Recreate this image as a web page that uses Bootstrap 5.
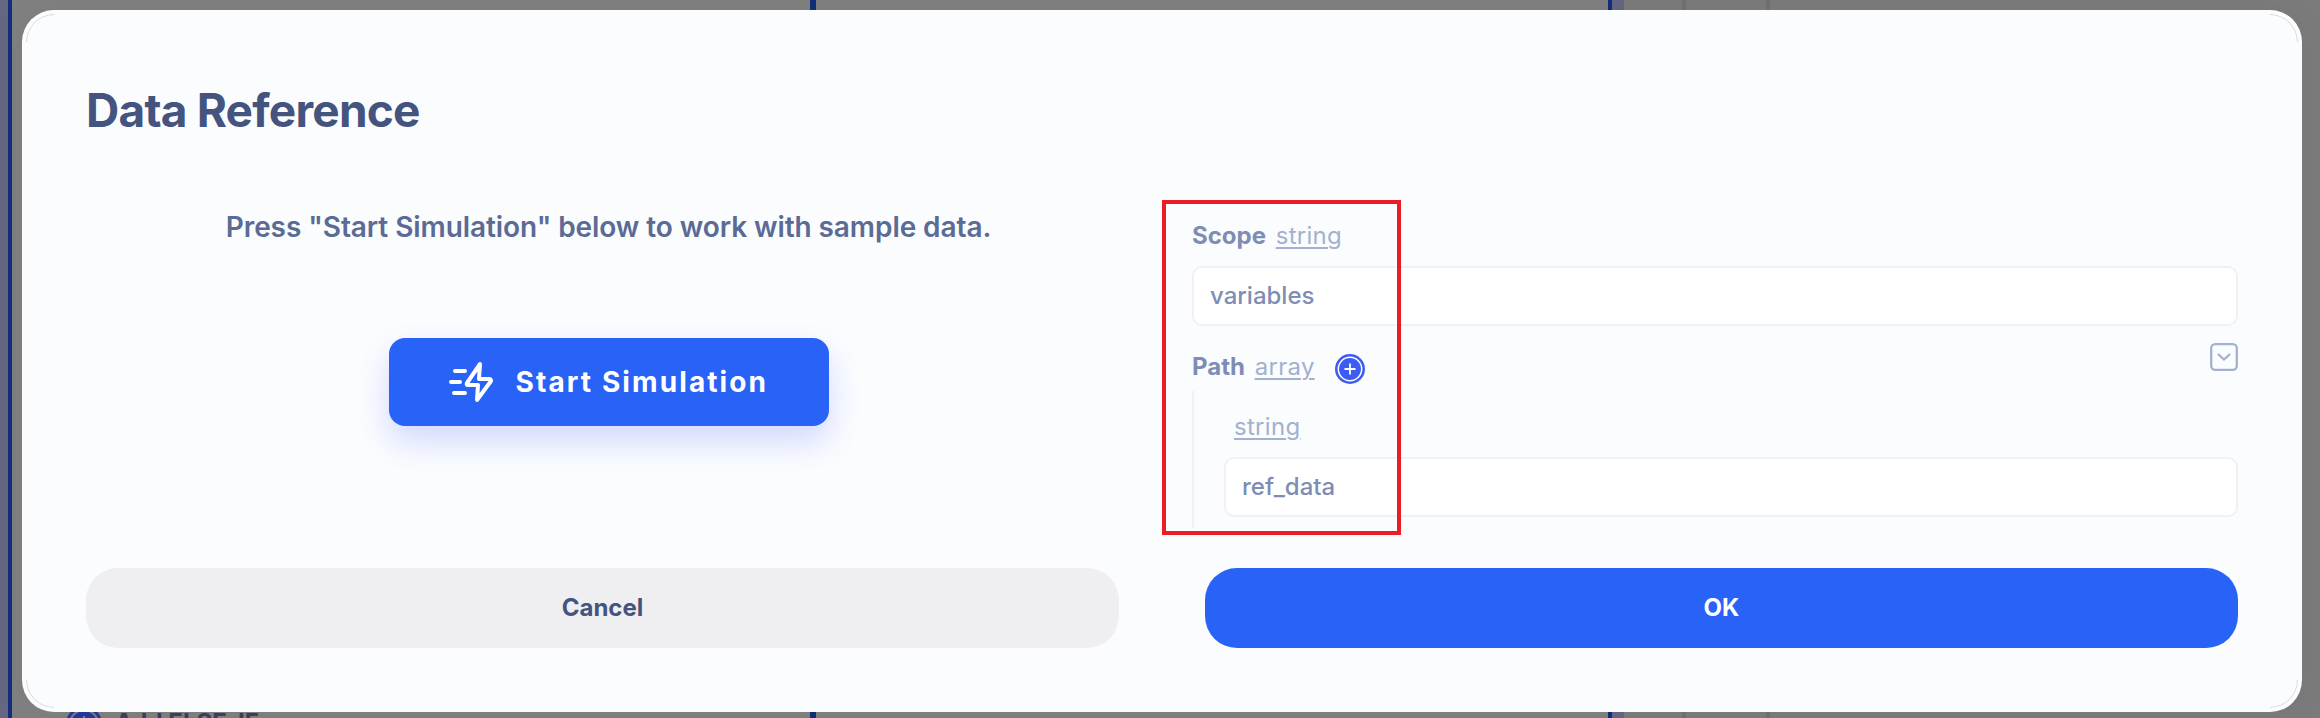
<!DOCTYPE html>
<html lang="en">
<head>
<meta charset="utf-8">
<title>Data Reference</title>
<link href="https://cdn.jsdelivr.net/npm/bootstrap@5.3.0/dist/css/bootstrap.min.css" rel="stylesheet">
<style>
body{font-family:Inter,"Liberation Sans",sans-serif;width:2320px;height:718px;overflow:hidden;background:#808080;position:relative;font-size:24px}
.rails{position:absolute;inset:0}
.rail{position:absolute;top:0;bottom:0}
.rail-blue{background:#132e7a}
.rail-soft{background:#64677f}
.rail-line{background:#717171}
.under-action{position:absolute;left:66px;top:706px;color:#3a4059;font-weight:700;line-height:36px}
.sheet{margin:10px 0 0 22px;width:2280px;height:702px;border-radius:32px;background:#fafcfe;padding:76px 64px 64px;position:relative;box-shadow:0 0 40px rgba(0,0,0,.04)}
.sheet-edge{position:absolute;inset:4px;border-radius:28px;pointer-events:none}
.sheet h1{font-size:46px;font-weight:700;color:#44547f;line-height:48px;margin:0;letter-spacing:-.77px}
.content-area{height:362px;position:relative;margin-top:6px;padding-top:60px;margin-bottom:12px}
.pane-left{width:1045px}
.hint{font-size:28px;font-weight:600;color:#5b6b95;line-height:36px;margin:9px 0 93px;letter-spacing:-.08px}
.btn-sim{width:440px;height:88px;border-radius:16px;background:#2962f6;color:#fff;font-size:28px;font-weight:700;letter-spacing:2.1px;box-shadow:0 16px 32px rgba(60,80,255,.2);padding:0 0 0 60px}
.pane-right{width:1046px;margin-left:61px;color:#7d8db3}
.field-label{font-weight:700;line-height:30px}
.kind{color:#a3b1ce;text-decoration:underline;font-weight:400;letter-spacing:.3px;text-decoration-thickness:2px;text-underline-offset:3px}
.field-box{height:60px;border:2px solid #f0f1f6;border-radius:10px;background:#fff;color:#7d8db3;font-size:24px;font-weight:500;padding:0 16px}
.nested{border-left:2px solid #f0f1f6;padding-left:30px;height:137px}
.marker{position:absolute;left:1162px;top:200px;width:239px;height:335px;border:4px solid #ee1c24}
.btn-foot{height:80px;border-radius:32px;font-size:24px;font-weight:700;border:0}
.btn-cancel{background:#efeff1;color:#44547f}
.btn-ok{background:#2962f6;color:#fff}
.foot{gap:86px}
</style>
</head>
<body>
<div class="rails">
 <div class="rail rail-soft" style="left:0;width:8px"></div>
 <div class="rail rail-blue" style="left:8px;width:4px"></div>
 <div class="rail rail-blue" style="left:810px;width:6px"></div>
 <div class="rail" style="left:1624px;right:0;background:#7b7b7b"></div>
 <div class="rail rail-blue" style="left:1608px;width:4px"></div>
 <div class="rail rail-soft" style="left:1612px;width:12px"></div>
 <div class="rail rail-line" style="left:1682px;width:4px"></div>
 <div class="rail rail-line" style="left:1766px;width:4px"></div>
 <div class="under-action d-flex"><svg width="36" height="36" viewBox="0 0 36 36"><circle cx="18" cy="18" r="18" fill="#24389a"/><circle cx="18" cy="18" r="14" fill="none" stroke="#808080" stroke-width="2"/><path d="M18 10v16M10 18h16" stroke="#808080" stroke-width="2"/></svg><span style="margin-left:13px;margin-top:-1px">Add ELSE-IF</span></div>
</div>
<main class="sheet d-flex flex-column">
 <svg class="sheet-edge" width="2272" height="694" fill="none" stroke="#d3d5d9" stroke-width="1"><path d="M.5 28A27.5 27.5 0 0 1 28 .5M2244 .5A27.5 27.5 0 0 1 2271.500 28M.5 666A27.500 27.500 0 0 0 28 693.500M2244 693.500A27.500 27.500 0 0 0 2271.500 666"/></svg>
 <h1>Data Reference</h1>
 <div class="content-area d-flex align-items-start">
  <section class="pane-left text-center">
   <p class="hint">Press "Start Simulation" below to work with sample data.</p>
   <button class="btn btn-sim border-0 d-inline-flex align-items-center">
    <svg width="44" height="42" viewBox="0 0 44 42" fill="none" stroke="#fff" stroke-width="4" stroke-linecap="round" stroke-linejoin="round"><path d="M6 10H16M2 21H11M5 32H16M31 3L18 22Q17 24 19 24H29L28 39L42 20Q42 18 40 18H30Z"/></svg>
    <span style="margin-left:23px">Start Simulation</span>
   </button>
  </section>
  <section class="pane-right">
   <div class="field-label" style="margin:21px 0 15px">Scope <span class="kind ms-1">string</span></div>
   <div class="field-box d-flex align-items-center">variables</div>
   <div class="d-flex align-items-start" style="height:65px;padding-top:17px">
    <div class="field-label" style="padding-top:9px">Path <span class="kind ms-1">array</span></div>
    <svg width="30" height="30" viewBox="0 0 30 30" style="margin:11px 0 0 20px"><circle cx="15" cy="15" r="15" fill="#3d5cf5"/><circle cx="15" cy="15" r="11.700" fill="none" stroke="#fff" stroke-width="1.500"/><path d="M15 9.500v11M9.500 15h11" stroke="#fff" stroke-width="1.800"/></svg>
    <svg class="ms-auto" width="28" height="28" viewBox="0 0 28 28" fill="none" stroke="#a3b1d1" stroke-width="2.300"><rect x="1.200" y="1.200" width="25.600" height="25.600" rx="4"/><path d="M8 11l6 5.500 6-5.500"/></svg>
   </div>
   <div class="nested">
    <div class="kind" style="padding:21px 0 15px 10px;line-height:30px">string</div>
    <div class="field-box d-flex align-items-center">ref_data</div>
   </div>
  </section>
 </div>
 <div class="foot d-flex mt-auto">
  <button class="btn btn-foot btn-cancel flex-fill w-50">Cancel</button>
  <button class="btn btn-foot btn-ok flex-fill w-50">OK</button>
 </div>
</main>
<div class="marker"></div>
<script src="https://cdn.jsdelivr.net/npm/bootstrap@5.3.0/dist/js/bootstrap.bundle.min.js"></script>
</body>
</html>
